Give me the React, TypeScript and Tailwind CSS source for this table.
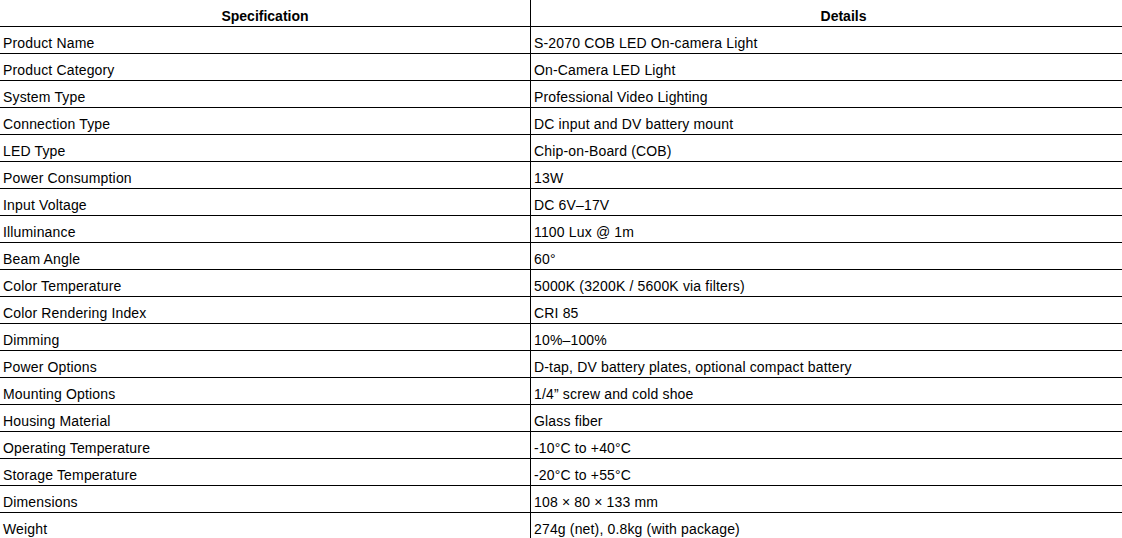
import React from "react";

const rows: [string, string][] = [
  ["Product Name", "S-2070 COB LED On-camera Light"],
  ["Product Category", "On-Camera LED Light"],
  ["System Type", "Professional Video Lighting"],
  ["Connection Type", "DC input and DV battery mount"],
  ["LED Type", "Chip-on-Board (COB)"],
  ["Power Consumption", "13W"],
  ["Input Voltage", "DC 6V–17V"],
  ["Illuminance", "1100 Lux @ 1m"],
  ["Beam Angle", "60°"],
  ["Color Temperature", "5000K (3200K / 5600K via filters)"],
  ["Color Rendering Index", "CRI 85"],
  ["Dimming", "10%–100%"],
  ["Power Options", "D-tap, DV battery plates, optional compact battery"],
  ["Mounting Options", "1/4” screw and cold shoe"],
  ["Housing Material", "Glass fiber"],
  ["Operating Temperature", "-10°C to +40°C"],
  ["Storage Temperature", "-20°C to +55°C"],
  ["Dimensions", "108 × 80 × 133 mm"],
  ["Weight", "274g (net), 0.8kg (with package)"],
];

export default function App() {
  return (
    <div
      className="w-[1122px] h-[538px] overflow-hidden bg-white text-black"
      style={{ fontFamily: '"Liberation Sans", Arial, sans-serif' }}
    >
      <div className="w-[1156px] flex flex-col text-[14px] leading-4">
        <div className="grid grid-cols-[531px_1fr] h-[27px] border-b border-black">
          <div className="border-r border-black text-center font-bold pt-[8px]">Specification</div>
          <div className="text-center font-bold pt-[8px]">Details</div>
        </div>
        {rows.map(([k, v]) => (
          <div key={k} className="grid grid-cols-[531px_1fr] h-[27px] border-b border-black tracking-[0.16px]">
            <div className="border-r border-black pl-[3px] pt-[8px] whitespace-nowrap">{k}</div>
            <div className="pl-[3px] pt-[8px] whitespace-nowrap">{v}</div>
          </div>
        ))}
      </div>
    </div>
  );
}
